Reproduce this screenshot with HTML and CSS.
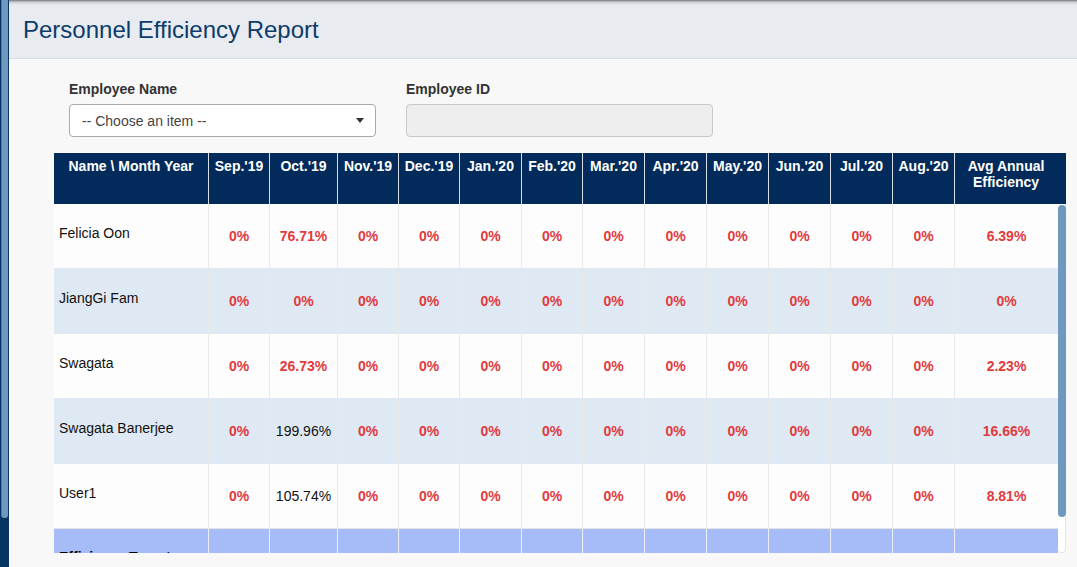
FILE: index.html
```html
<!DOCTYPE html>
<html>
<head>
<meta charset="utf-8">
<link rel="stylesheet" href="styles.css">
</head>
<body>
<div class="frame">
  <div class="rail"><div class="rail-thumb"></div></div>
  <div class="main">
    <header class="topbar"><h1 class="title">Personnel Efficiency Report</h1></header>
    <div class="content">
      <div class="filters">
        <div class="field">
          <label class="label">Employee Name</label>
          <div class="select"><span>-- Choose an item --</span><span class="caret"></span></div>
        </div>
        <div class="field">
          <label class="label">Employee ID</label>
          <div class="input"></div>
        </div>
      </div>
      <div class="report">
        <div class="row head">
          <div class="cell">Name \ Month Year</div>
          <div class="cell">Sep.'19</div>
          <div class="cell">Oct.'19</div>
          <div class="cell">Nov.'19</div>
          <div class="cell">Dec.'19</div>
          <div class="cell">Jan.'20</div>
          <div class="cell">Feb.'20</div>
          <div class="cell">Mar.'20</div>
          <div class="cell">Apr.'20</div>
          <div class="cell">May.'20</div>
          <div class="cell">Jun.'20</div>
          <div class="cell">Jul.'20</div>
          <div class="cell">Aug.'20</div>
          <div class="cell">Avg Annual<br>Efficiency</div>
        </div>
        <div class="scroller">
          <div class="body">
            <div class="row">
              <div class="cell name">Felicia Oon</div>
              <div class="cell bad">0%</div><div class="cell bad">76.71%</div><div class="cell bad">0%</div><div class="cell bad">0%</div><div class="cell bad">0%</div><div class="cell bad">0%</div><div class="cell bad">0%</div><div class="cell bad">0%</div><div class="cell bad">0%</div><div class="cell bad">0%</div><div class="cell bad">0%</div><div class="cell bad">0%</div><div class="cell bad">6.39%</div>
            </div>
            <div class="row alt">
              <div class="cell name">JiangGi Fam</div>
              <div class="cell bad">0%</div><div class="cell bad">0%</div><div class="cell bad">0%</div><div class="cell bad">0%</div><div class="cell bad">0%</div><div class="cell bad">0%</div><div class="cell bad">0%</div><div class="cell bad">0%</div><div class="cell bad">0%</div><div class="cell bad">0%</div><div class="cell bad">0%</div><div class="cell bad">0%</div><div class="cell bad">0%</div>
            </div>
            <div class="row">
              <div class="cell name">Swagata</div>
              <div class="cell bad">0%</div><div class="cell bad">26.73%</div><div class="cell bad">0%</div><div class="cell bad">0%</div><div class="cell bad">0%</div><div class="cell bad">0%</div><div class="cell bad">0%</div><div class="cell bad">0%</div><div class="cell bad">0%</div><div class="cell bad">0%</div><div class="cell bad">0%</div><div class="cell bad">0%</div><div class="cell bad">2.23%</div>
            </div>
            <div class="row alt">
              <div class="cell name">Swagata Banerjee</div>
              <div class="cell bad">0%</div><div class="cell">199.96%</div><div class="cell bad">0%</div><div class="cell bad">0%</div><div class="cell bad">0%</div><div class="cell bad">0%</div><div class="cell bad">0%</div><div class="cell bad">0%</div><div class="cell bad">0%</div><div class="cell bad">0%</div><div class="cell bad">0%</div><div class="cell bad">0%</div><div class="cell bad">16.66%</div>
            </div>
            <div class="row">
              <div class="cell name">User1</div>
              <div class="cell bad">0%</div><div class="cell">105.74%</div><div class="cell bad">0%</div><div class="cell bad">0%</div><div class="cell bad">0%</div><div class="cell bad">0%</div><div class="cell bad">0%</div><div class="cell bad">0%</div><div class="cell bad">0%</div><div class="cell bad">0%</div><div class="cell bad">0%</div><div class="cell bad">0%</div><div class="cell bad">8.81%</div>
            </div>
            <div class="row target">
              <div class="cell name strong">Efficiency Target</div>
              <div class="cell"></div><div class="cell"></div><div class="cell"></div><div class="cell"></div><div class="cell"></div><div class="cell"></div><div class="cell"></div><div class="cell"></div><div class="cell"></div><div class="cell"></div><div class="cell"></div><div class="cell"></div><div class="cell"></div>
            </div>
          </div>
          <div class="vbar"><div class="vbar-thumb"></div></div>
        </div>
      </div>
    </div>
  </div>
</div>
</body>
</html>
```

FILE: styles.css
```css
* { box-sizing: border-box; }
html, body { margin: 0; padding: 0; height: 100%; overflow: hidden; }
body {
  font-family: "Liberation Sans", Arial, sans-serif;
  font-size: 14px;
  color: #222;
  background: #f8f8f8;
}
.frame { display: flex; height: 100vh; }
.rail {
  width: 9px;
  flex: 0 0 9px;
  background: #063562;
}
.rail-thumb {
  margin-left: 1px;
  width: 7px;
  height: 518px;
  background: #6f99c0;
  border-radius: 0 0 3px 3px;
  border-left: 1px solid #4d7aa6;
}
.main { flex: 1; display: flex; flex-direction: column; }
.topbar {
  height: 59px;
  padding: 16px 0 0 14px;
  background: linear-gradient(#6a6a6a 0, #a9acb1 1px, #d7dae0 3px, #e8ebf0 5px);
  border-bottom: 1px solid #d6dae1;
}
.title {
  margin: 0;
  font-weight: normal;
  font-size: 24px;
  line-height: 28px;
  color: #0d3c6b;
}
.content { padding: 20px 0 0 45px; }
.filters { display: flex; width: 1012px; }
.field { width: 337px; padding: 0 15px; }
.label {
  display: block;
  font-weight: bold;
  font-size: 14px;
  line-height: 20px;
  color: #333;
  margin-bottom: 5px;
}
.select {
  height: 33px;
  background: #fff;
  border: 1px solid #aaa;
  border-radius: 4px;
  display: flex;
  align-items: center;
  justify-content: space-between;
  padding: 0 12px 0 12px;
  color: #444;
  font-size: 14px;
}
.caret {
  width: 0; height: 0;
  border-left: 4px solid transparent;
  border-right: 4px solid transparent;
  border-top: 5px solid #333;
  margin-right: -1px;
}
.input {
  height: 33px;
  background: #eee;
  border: 1px solid #c9c9c9;
  border-radius: 4px;
}
.report { width: 1012px; margin-top: 16px; }
.row {
  display: grid;
  grid-template-columns: 155px 61px 68px 61px 61px 62px 61px 62px 62px 62px 62px 62px 62px 1fr;
}
.head { background: #022b5b; height: 51px; }
.head .cell {
  color: #fff;
  font-weight: bold;
  font-size: 14px;
  line-height: 16px;
  text-align: center;
  padding: 5px 0 0;
  white-space: nowrap;
  border-right: 1px solid #d9dee6;
}
.head .cell:last-child { border-right: none; padding-right: 9px; }
.scroller {
  display: flex;
  height: 349px;
}
.body {
  flex: 1;
  overflow: hidden;
}
.vbar {
  width: 8px;
  flex: 0 0 8px;
  background: #fff;
  border-right: 1px solid #e4e4e4;
  border-bottom: 1px solid #e4e4e4;
  border-radius: 0 0 4px 4px;
  padding-top: 1px;
}
.vbar-thumb {
  height: 312px;
  background: #7099bf;
  border-radius: 4px;
  margin-right: -1px;
}
.body .row { height: 65px; background: #fdfdfd; border-top: 1px solid #ececec; }
.body .row:first-child { border-top: none; height: 64px; }
.body .row.alt { background: #dfe9f3; border-top-color: #dfe9f3; }
.body .row.alt + .row { border-top-color: #dfe9f3; }
.body .row.target { background: #a6bcf9; border-top-color: #e3e3e3; }
.body .cell {
  display: flex;
  align-items: center;
  justify-content: center;
  border-right: 1px solid #e9e9e9;
  font-size: 14px;
  color: #111;
}
.body .row.target .cell { border-right-color: #edf0f7; }
.body .cell:last-child { border-right: none; }
.body .cell.name {
  justify-content: flex-start;
  padding: 0 0 7px 5px;
}
.body .cell.bad { color: #e23a3e; font-weight: bold; }
.body .cell.strong { font-weight: bold; color: #000; padding-bottom: 8px; }
```
